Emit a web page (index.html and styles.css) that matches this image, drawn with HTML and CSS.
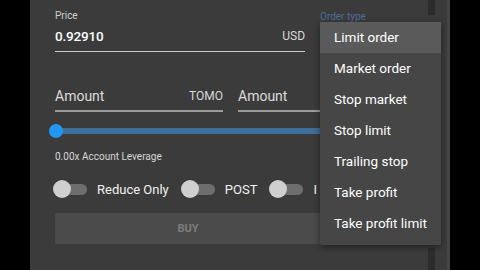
FILE: index.html
```html
<!DOCTYPE html>
<html>
<head>
<meta charset="utf-8">
<link rel="stylesheet" href="styles.css">
</head>
<body>
<div class="screen">
  <div class="panel">
    <div class="scroll scroll-top"></div>
    <div class="scroll scroll-bottom"></div>
    <div class="form">
      <div class="price-row">
        <div class="field price-field">
          <div class="label">Price</div>
          <div class="input-line"><span class="value">0.92910</span><span class="unit">USD</span></div>
        </div>
        <div class="order-type-label">Order type</div>
      </div>
      <div class="amount-row">
        <div class="field amount-field">
          <div class="input-line"><span class="placeholder">Amount</span><span class="unit">TOMO</span></div>
        </div>
        <div class="field amount-field2">
          <div class="input-line"><span class="placeholder">Amount</span></div>
        </div>
      </div>
      <div class="slider"><div class="track"></div><div class="thumb"></div></div>
      <div class="leverage">0.00x Account Leverage</div>
      <div class="toggles">
        <div class="toggle"><span class="switch"><span class="knob"></span></span><span class="tlabel">Reduce Only</span></div>
        <div class="toggle"><span class="switch"><span class="knob"></span></span><span class="tlabel">POST</span></div>
        <div class="toggle"><span class="switch"><span class="knob"></span></span><span class="tlabel">I</span></div>
      </div>
      <div class="buy">BUY</div>
    </div>
    <div class="menu">
      <div class="item active">Limit order</div>
      <div class="item">Market order</div>
      <div class="item">Stop market</div>
      <div class="item">Stop limit</div>
      <div class="item">Trailing stop</div>
      <div class="item">Take profit</div>
      <div class="item">Take profit limit</div>
    </div>
  </div>
</div>
</body>
</html>
```
FILE: styles.css
```css
* { box-sizing: border-box; }
html, body { margin: 0; padding: 0; background: #000; }
body { width: 480px; height: 270px; overflow: hidden; font-family: Roboto, "Liberation Sans", sans-serif; }
.screen { width: 480px; height: 270px; display: flex; }
.panel {
  position: relative;
  margin-left: 30px;
  width: 420px;
  height: 270px;
  background: #3b3b3b;
  border-right: 3px solid #454545;
  overflow: hidden;
}
.scroll { position: absolute; left: 398px; width: 7px; background: #2c2c2c; }
.scroll-top { top: 0; height: 15px; }
.scroll-bottom { top: 248px; height: 22px; }
.form { padding: 9px 0 0 25px; display: flex; flex-direction: column; }
.price-row { display: flex; align-items: flex-start; }
.price-field { width: 250px; }
.label { font-size: 10px; color: #d0d0d0; line-height: 14px; }
.input-line {
  display: flex; justify-content: space-between; align-items: center;
  border-bottom: 1.5px solid #c8c8c8;
  height: 29px;
  padding-bottom: 2px;
}
.value { font-size: 13.5px; color: #fff; font-weight: 500; letter-spacing: -0.2px; }
.unit { font-size: 12px; color: #d8d8d8; }
.order-type-label { margin-left: 15px; margin-top: 1px; font-size: 10px; color: #4f6c98; line-height: 14px; }
.amount-row { display: flex; gap: 15px; margin-top: 32px; }
.amount-field { width: 168px; }
.amount-field2 { width: 170px; }
.amount-row .input-line { border-bottom: 2px solid #9a9a9a; height: 28px; }
.placeholder { font-size: 14px; color: #dcdcdc; }
.slider { position: relative; height: 14px; margin-top: 12px; margin-left: -6px; width: 340px; }
.track { position: absolute; left: 6px; right: 0; top: 4px; height: 6px; background: #3d6d99; }
.thumb { position: absolute; left: 0; top: 0; width: 14px; height: 14px; border-radius: 50%; background: #2196f3; }
.leverage { font-size: 10px; color: #d6d6d6; margin-top: 12px; line-height: 14px; }
.toggles { display: flex; align-items: center; margin-top: 16px; margin-left: -2px; }
.toggle { display: flex; align-items: center; }
.switch { position: relative; width: 34px; height: 18px; display: inline-block; }
.switch::before { content: ""; position: absolute; left: 8px; top: 4px; width: 26px; height: 11px; border-radius: 6px; background: #6e6e6e; }
.knob { position: absolute; left: 0; top: 0; width: 18px; height: 18px; border-radius: 50%; background: #cfcfcf; }
.tlabel { font-size: 13px; color: #f2f2f2; margin-left: 10px; margin-right: 12px; }
.buy {
  margin-top: 15px;
  width: 360px;
  height: 31px;
  background: #4b4b4b;
  border-radius: 2px;
  display: flex; align-items: center; justify-content: center;
  font-size: 11px; font-weight: 700; color: #7c7c7c;
  padding-right: 94px;
}
.menu {
  position: absolute;
  left: 290px; top: 22px;
  width: 121px;
  background: #464646;
  box-shadow: 0 2px 6px rgba(0,0,0,0.45);
  border-radius: 2px;
  padding: 0 0 6px 0;
}
.item { height: 31px; line-height: 31px; padding-left: 14px; font-size: 13.5px; color: #fff; white-space: nowrap; }
.item.active { background: #5a5a5a; }
```
